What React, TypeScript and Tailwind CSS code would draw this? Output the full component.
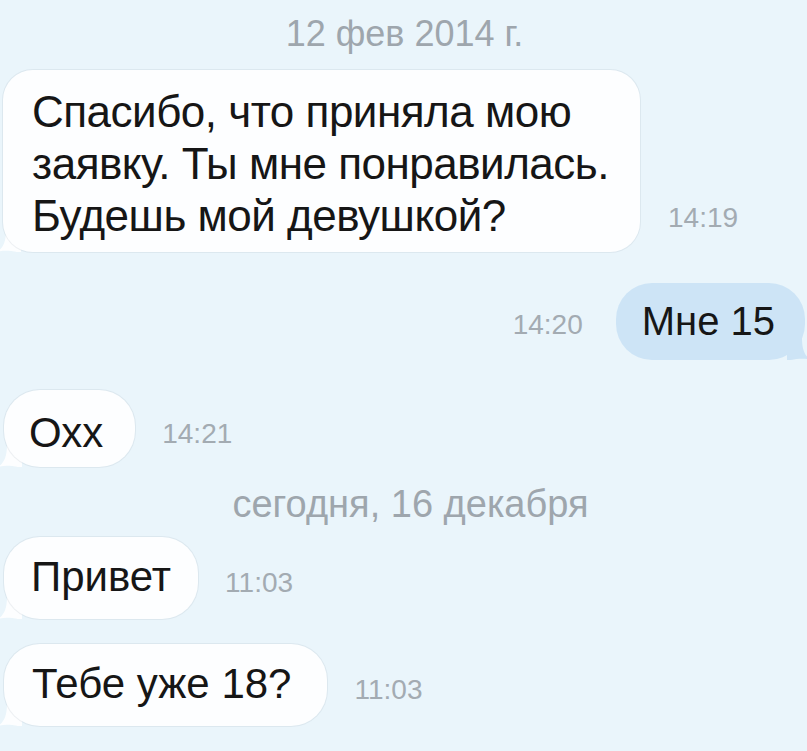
import React from "react";

const Tail = ({ side, color }: { side: "left" | "right"; color: string }) =>
  side === "left" ? (
    <svg
      className="absolute -left-[6px] bottom-0"
      width="24"
      height="22"
      viewBox="0 0 24 22"
    >
      <path d="M24 0 L24 22 L20 22 C14 21 6 20 0 22 C6 18 9 12 9 0 Z" fill={color} />
    </svg>
  ) : (
    <svg
      className="absolute -right-[6px] bottom-0"
      width="24"
      height="22"
      viewBox="0 0 24 22"
    >
      <path d="M0 0 L0 22 L4 22 C10 21 18 20 24 22 C18 18 15 12 15 0 Z" fill={color} />
    </svg>
  );

function Time({ children, className = "" }: { children: string; className?: string }) {
  return (
    <span className={"text-[28px] leading-[28px] text-[#a3abb2] " + className}>
      {children}
    </span>
  );
}

function Incoming({
  text,
  time,
  className = "",
  pad,
}: {
  text: string;
  time: string;
  className?: string;
  pad: string;
}) {
  return (
    <div className={"flex items-center " + className}>
      <div className="relative ml-[4px]">
        <Tail side="left" color="#fdfeff" />
        <div
          className={
            "relative rounded-[36px] bg-[#fdfeff] text-[42px] leading-[48px] text-[#161616] shadow-[0_0_0_1px_rgba(120,140,160,0.12)] " +
            pad
          }
        >
          {text}
        </div>
      </div>
      <Time className="ml-[27px] mt-[10px]">{time}</Time>
    </div>
  );
}

export default function App() {
  return (
    <div
      className="flex h-[751px] w-full flex-col overflow-hidden bg-[#eaf5fb]"
      style={{ fontFamily: '"Liberation Sans", Arial, sans-serif' }}
    >
      <div className="pl-[2px] pt-[14px] text-center text-[36px] leading-[40px] text-[#9ea6ad]">
        12 фев 2014 г.
      </div>

      <div className="mt-[16px] flex items-end">
        <div className="relative ml-[3px]">
          <Tail side="left" color="#fdfeff" />
          <div className="relative w-[637px] rounded-[30px] bg-[#fdfeff] pb-[10px] pl-[29px] pt-[16px] text-[44px] leading-[52px] tracking-[-0.5px] text-[#161616] shadow-[0_0_0_1px_rgba(120,140,160,0.12)]">
            Спасибо, что приняла мою
            <br />
            заявку. Ты мне понравилась.
            <br />
            Будешь мой девушкой?
          </div>
        </div>
        <Time className="mb-[20px] ml-[28px]">14:19</Time>
      </div>

      <div className="mt-[31px] flex items-center justify-end">
        <Time className="mr-[33px] mt-[6px]">14:20</Time>
        <div className="relative mr-[2px]">
          <Tail side="right" color="#cde4f6" />
          <div className="relative rounded-[36px] bg-[#cde4f6] pb-[15px] pl-[26px] pr-[30px] pt-[14px] text-[40px] leading-[48px] text-[#161616]">
            Мне 15
          </div>
        </div>
      </div>

      <Incoming
        className="mt-[30px]"
        text="Охх"
        time="14:21"
        pad="pb-[10px] pl-[25px] pr-[32px] pt-[19px]"
      />

      <div className="ml-[14px] mt-[16px] text-center text-[38px] leading-[42px] text-[#9ea6ad]">
        сегодня, 16 декабря
      </div>

      <Incoming
        className="mt-[12px]"
        text="Привет"
        time="11:03"
        pad="pb-[18px] pl-[27px] pr-[27px] pt-[16px]"
      />

      <Incoming
        className="mt-[25px]"
        text="Тебе уже 18?"
        time="11:03"
        pad="pb-[18px] pl-[28px] pr-[36px] pt-[16px]"
      />
    </div>
  );
}
